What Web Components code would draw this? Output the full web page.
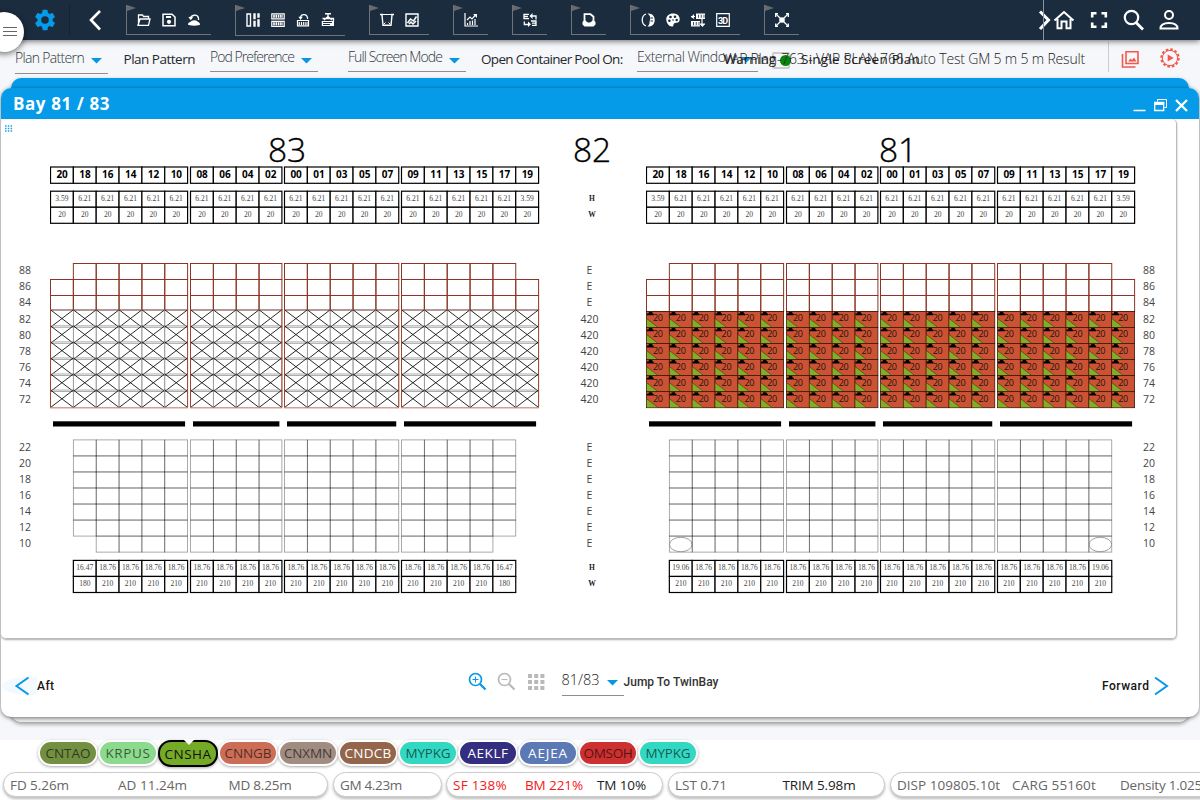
<!DOCTYPE html>
<html lang="en"><head><meta charset="utf-8"><title>Bay plan</title>
<style>html,body{margin:0;height:100%;overflow:hidden}body{font-family:"Open Sans","Noto Sans",sans-serif;background:#f5f7fa}</style></head>
<body><stow-app></stow-app>
<script>
const define=(name,html,setup)=>customElements.define(name,class extends HTMLElement{
  connectedCallback(){
    if(this.shadowRoot)return;
    const t=document.createElement('template');
    t.innerHTML=typeof html==='function'?html(this):html;
    this.attachShadow({mode:'open'}).append(t.content.cloneNode(true));
    if(setup)setup(this);
  }
});

/* One line of text tracked to a given width */
define('fit-text','<style>:host{display:block;white-space:nowrap;flex:none}span{display:inline-block}</style><span><slot></slot></span>',el=>{
  const w=+el.getAttribute('w'),s=el.shadowRoot.querySelector('span');
  el.style.width=w+'px';
  const n=el.textContent.length,now=s.getBoundingClientRect().width;
  s.style.letterSpacing=((w-now)/n)+'px';
});

const S='fill="none" stroke="currentColor" ';
const ICONS={
 folder:`<path ${S}stroke-width="1.3" d="M1.5 12V2h4l1 1.5h5V6M1 12.3l2-6.3h10l-1.5 6.3z"/>`,
 save:`<path ${S}stroke-width="1.5" d="M1 1.2h9L13 4v8.8H1z"/><path fill="currentColor" d="M4 3h5v2H4z"/><circle cx="7" cy="8.8" r="2.1" fill="currentColor"/>`,
 reload:`<path ${S}stroke-width="1.3" d="M3.5 5.5C4 2 10 .5 11.500 5V7"/><path fill="currentColor" d="M1.300 4l5-.3-2.500 3.600zM1 11.500C1 9 3.500 9.500 4.500 8c2-1 4-1 5.500 0 1 1.500 3 1 3 3.500 0 1.500-11.500 1.500-12 0z"/>`,
 layout:`<path ${S}stroke-width="1.400" d="M1 1h3.500v12H1zM8 1h1v4.500H8zM8 8.500h1V13H8zM12 1h1v3h-1zM12 7h1v6h-1z"/>`,
 stack:`<path ${S}stroke-width="1.200" d="M.8.8h12.400v5H.8zM.8 8.300h12.400v5H.8z"/><path ${S}stroke-width="3" stroke-dasharray="1.600 .7" d="M2.200 3.300H12M2.200 10.800H12"/>`,
 load:`<path ${S}stroke-width="1.200" d="M4.500 4.500C5 .5 11 .5 11.500 5v1M1.500 7.500h11v5.300h-11z"/><path fill="currentColor" d="M2.500 3.800h4.300L4.500 7z"/><path ${S}stroke-width="3" stroke-dasharray="1.200 1" d="M2.700 10.500H12"/>`,
 crane:`<path fill="currentColor" d="M4 0h6v1.500H4zM.8 8H13v5H.8z"/><path ${S}stroke-width="1.300" d="M7 1v2.500L3 7M7 3.500L11 7M1.500 5.500h11V8"/><path stroke="#1b2c3d" d="M2 9.500h9M2 11.500h7"/>`,
 bin:`<path ${S}stroke-width="1.400" d="M0 1.500h3M11 1.500h3M2 2l1 10.300h8L12 2"/><path ${S}d="M3 1.500h8M4 11l1.500-1.500M10 11l-1.500-1.500"/>`,
 image:`<path ${S}stroke-width="1.400" d="M1 1h12v12H1z"/><path ${S}stroke-width="1.500" d="M2.500 10l3-4 3 2 3-4.500M4 11l2-2 2 2 3-3"/>`,
 chart:`<path ${S}stroke-width="1.200" d="M1 0v13h13M3.500 12v-2M6 12V8M8.500 12V7.500M11 12V6M3 7l3-3 2 2 4-4.500"/><path fill="currentColor" d="M9 1h4v4z"/>`,
 swap:`<path ${S}stroke-width="1.300" d="M6 1.300H1v4.400h5M1 3.500h4M8 3h5v3.500M8 8h5v4.300H9M13 10.200H9M5 11.500H1.300V8.500"/><path fill="currentColor" d="M9.500 0v6L6.500 3zM5 8.500v5.500l3-2.700z"/>`,
 doc:`<path ${S}stroke-width="1.800" d="M2.500 9V1.200h6l3 2.500V9"/><path fill="currentColor" d="M.5 9c2-2.500 3-2 4-.5 1 1.300 4 1.300 5 0 1-1.500 2-1.500 4 .5v2.500l-2 2H2.500l-2-2z"/>`,
 contrast:`<path ${S}stroke-width="1.300" d="M5 1C0 3 0 11 5 13"/><path fill="currentColor" d="M6.500.5C11 0 13.700 3 13.700 7S11 14 6.500 13.500C9.500 11 8 9 9 7S9.500 3 6.500.5z"/><path stroke="#1b2c3d" d="M11 4v2M12 8H9.500"/>`,
 palette:`<path fill="currentColor" d="M7 .5C3 .5.3 3 .3 6.500S3 13.500 6 13.500c2 0 1-2 2-3s5.700 0 5.700-4S11 .5 7 .5z"/><g fill="#1b2c3d"><circle cx="4.500" cy="4" r="1.300"/><circle cx="9" cy="3.700" r="1.300"/><circle cx="3.400" cy="7.700" r="1.300"/><circle cx="10.700" cy="7" r="1.200"/><circle cx="7" cy="7" r=".8"/></g>`,
 blocks:`<path ${S}stroke-width="4" stroke-dasharray="2 .8" d="M5 3h9M0 10.500h9"/><path ${S}stroke-width="1.200" d="M5 1.200h9M5 5.300h9M0 8.500h9M0 12.800h9M0 3.500h4M11 6v7M14 11H9"/><path fill="currentColor" d="M0 4l3-3v5zM9 11h5l-2.500 3z"/>`,
 d3:`<path ${S}stroke-width="1.200" d="M.7.7h12.600v12.600H.7z"/><text x="7" y="10.500" font-size="9" font-weight="700" font-family="Roboto,sans-serif" text-anchor="middle" fill="currentColor" textLength="10">3D</text>`,
 expand:`<circle cx="7" cy="7" r="2.800" fill="currentColor"/><path ${S}stroke-width="1.300" d="M1 1l12 12M13 1L1 13"/><path ${S}stroke-width="1.300" d="M.7 4V.7H3M11 .7h2.300V4M.7 10.500v2.800H3M11 13.300h2.300v-2.800"/>`
};
define('tool-icon',el=>`<style>:host{display:block;width:14px;height:14px;flex:none;color:#fff}svg{display:block;overflow:visible}</style><svg width="14" height="14" viewBox="0 0 14 14">${ICONS[el.getAttribute('name')]}</svg>`);
define('tool-group',el=>`<style>:host{box-sizing:border-box;position:relative;display:flex;gap:11px;align-items:center;height:30px;margin-top:5px;width:${el.getAttribute('w')}px;padding:0 0 0 10px;border-left:1px solid #717477;border-bottom:1px solid #717477;flex:none}
svg{position:absolute;left:0;top:0}</style><svg width="9" height="6"><path fill="#666a6e" d="M0 0l9 3-9 3z"/></svg>${el.getAttribute('icons').split(' ').map(n=>`<tool-icon name="${n}"></tool-icon>`).join('')}`);

define('top-bar',`<style>:host{display:flex;height:40px;background:#1b2c3e;position:relative;z-index:3;box-shadow:0 1px 6px #0009}
.lead{width:126px;flex:none}.tools{display:flex;gap:24px}.end{margin-left:auto;width:166px}svg{display:block}.menu{position:absolute;left:-16px;top:12px;width:40px;height:40px;border-radius:50%;background:#fff;box-shadow:0 2px 6px #0008}
.menu i{display:block;width:14px;height:1px;background:#666;border:0;margin:0 0 3px 19px}.menu i:first-child{margin-top:15px}</style>
<svg class="lead" width="126" height="40"><path fill="#059be8" fill-rule="evenodd" transform="translate(32.300 7.300) scale(1.060)" d="M19.140 12.940c.04-.3.060-.61.060-.94s-.02-.64-.07-.94l2.030-1.580a.49.490 0 0 0 .12-.61l-1.920-3.320a.49.490 0 0 0-.59-.22l-2.390.96a7 7 0 0 0-1.620-.94l-.36-2.540a.48.480 0 0 0-.48-.41h-3.840a.47.470 0 0 0-.47.410l-.36 2.540a7.300 7.300 0 0 0-1.620.94l-2.390-.96a.48.480 0 0 0-.59.220L2.740 8.870a.47.470 0 0 0 .12.610l2.030 1.580a7 7 0 0 0 0 1.880l-2.030 1.580a.49.490 0 0 0-.12.610l1.920 3.320c.12.220.37.290.59.220l2.390-.96c.5.380 1.030.7 1.620.94l.36 2.540c.05.240.24.410.48.410h3.840c.24 0 .44-.17.470-.41l.36-2.540a7 7 0 0 0 1.620-.94l2.390.96c.22.080.47 0 .59-.22l1.920-3.320a.47.470 0 0 0-.12-.61zM12 15.600a3.600 3.600 0 1 1 0-7.200 3.600 3.600 0 0 1 0 7.200z"/><path stroke="#142231" d="M69.500 5v30"/><path fill="none" stroke="#fff" stroke-width="2.600" d="M100 11l-9 9 9 9.500"/></svg>
<div class="tools"><tool-group w="85" icons="folder save reload"></tool-group><tool-group w="110" icons="layout stack load crane" style="height:31px"></tool-group><tool-group w="60" icons="bin image"></tool-group><tool-group w="60" icons="chart" style="width:35px"></tool-group><tool-group w="35" icons="swap"></tool-group><tool-group w="35" icons="doc"></tool-group><tool-group w="110" icons="contrast palette blocks d3"></tool-group><tool-group w="35" icons="expand"></tool-group></div>
<svg class="end" width="166" height="40" viewBox="1034 0 166 40" fill="none" stroke="#fff" stroke-width="2"><path stroke-width="3" d="M1040 11.500l8.500 8.500-8.500 9"/><path stroke="#8a949d" stroke-width="1" d="M1043.500 0v40"/><path d="M1054.500 20.500l9.500-8.500 9.500 8.500M1057.500 19v9.300h4V21.500h5v6.800h4V19"/><path stroke-width="2.600" d="M1092.200 17.500v-4.300h4.300M1101.500 13.200h4.300v4.300M1105.800 22.500v4.300h-4.300M1096.500 26.800h-4.300v-4.300"/><circle cx="1131.500" cy="17.500" r="6.700" stroke-width="2.200"/><path stroke-width="2.800" d="M1136 22.500l7 7"/><circle cx="1169" cy="15" r="4"/><path d="M1160.500 28.500c0-4 4-5.500 8.500-5.500s8.500 1.500 8.500 5.500z"/></svg>
<div class="menu"><i></i><i></i><i></i></div>`);

define('drop-field',el=>`<style>:host{box-sizing:border-box;display:flex;align-items:flex-start;height:${el.getAttribute('h')||24}px;width:${el.getAttribute('w')}px;border-bottom:1px solid #8e8e8e;color:#33383d;font-size:14px;font-weight:300;line-height:18px;flex:none;justify-content:space-between}
svg{margin:${el.getAttribute('ty')||9}px 6px 0 0;flex:none}</style><slot></slot><svg width="11" height="6"><path fill="#0797e2" d="M0 0h11L5.500 5.500z"/></svg>`);

define('option-bar',`<style>:host{display:block;height:38px;position:relative;font-size:13.500px;color:#24282c;line-height:18px}
.row{display:flex;padding-left:15px;align-items:flex-start}.lab{margin-top:10px}.over{position:absolute;top:10px;font-weight:300;color:#222}
.box{position:absolute;left:772px;top:12px;width:14px;height:13px;border:2px solid #ccc;border-radius:2px}.dot{position:absolute;left:780px;top:15px;width:11px;height:11px;border-radius:50%;background:#0a870a}
.icons{position:absolute;right:0;top:0}</style>
<div class="row"><drop-field w="93" h="34" style="padding-top:9px;" ty="9"><fit-text w="69">Plan Pattern</fit-text></drop-field>
<fit-text class="lab" w="71.500" style="margin-left:15.500px">Plan Pattern</fit-text>
<drop-field w="108" h="32" style="margin-left:15px;padding-top:8px" ty="10"><fit-text w="84">Pod Preference</fit-text></drop-field>
<drop-field w="118" h="32" style="margin-left:30px;padding-top:8px" ty="10"><fit-text w="94">Full Screen Mode</fit-text></drop-field>
<fit-text class="lab" w="141.500" style="margin-left:15px">Open Container Pool On:</fit-text>
<drop-field w="121" h="32" style="margin-left:14.500px;padding-top:8px" ty="9"><fit-text w="98">External Window</fit-text></drop-field></div>
<span class="box"></span><span class="dot"></span>
<fit-text class="over" style="left:723px;font-size:14px" w="362">VAP Plan-763 - VAP PLAN 766 Auto Test GM 5 m 5 m Result</fit-text>
<fit-text class="over" style="left:724px;font-weight:400" w="52">Warning</fit-text><fit-text class="over" style="left:801px;font-weight:400" w="119">Single Screen Plan</fit-text>
<svg class="icons" width="100" height="38" viewBox="1100 40 100 38" fill="none" stroke="#f4584c"><path stroke="#c9ccd0" d="M1108.500 42v30"/><path stroke-width="1.600" d="M1126 51.700h12v11.800h-12zM1122.500 54v13h13"/><path fill="#f4584c" stroke="none" d="M1128 61.500l2.500-3 1.500 1.600 2-2.600 2.500 4z"/><circle cx="1170" cy="58" r="8.600" stroke-width="2.200" stroke-dasharray="2.600 1.900"/><circle cx="1170" cy="58" r="7.600" stroke-width="1"/><path fill="#f4584c" stroke="none" d="M1167.700 54.500l6 3.500-6 3.500z"/></svg>`);

/* Ship cross-section geometry */
const CW=22.85,RH=16.05;
const GROUPS=[[0,['20','18','16','14','12','10']],[140,['08','06','04','02']],[234,['00','01','03','05','07']],[351,['09','11','13','15','17','19']]];
const COLS=GROUPS.flatMap(([x,ns])=>ns.map((n,i)=>({n,x:x+i*CW+.5})));
const text=(x,y,s,a)=>`<text x="${x}" y="${y}" text-anchor="middle" ${a}>${s}</text>`;
const rect=(x,y,h,a)=>`<rect x="${x.toFixed(2)}" y="${y.toFixed(2)}" width="${CW}" height="${h}" ${a}/>`;
const serif='font-family="Liberation Serif,serif" font-size="7.500" fill="#444"';
const big='font-family="Open Sans" font-weight="300" font-size="33.500" textLength="38" fill="#000" stroke="#000" stroke-width=".35"';
define('bay-section',el=>{
  const right=el.getAttribute('mode')==='loaded';let o='';
  o+=text(right?252:237,43,el.getAttribute('no'),big);
  COLS.forEach((c,i)=>{
    const edge=i===0||i===20,m=c.x+CW/2;
    const bk='fill="#fff" stroke="#000" stroke-width="1.200"';
    o+=rect(c.x,48,16.3,bk)+text(m+.2,59.200,c.n,'font-family="Noto Sans" font-weight="700" font-size="10" fill="#000"');
    o+=rect(c.x,72.200,16.050,bk)+rect(c.x,88.250,16.050,bk)+text(m,82.200,edge?'3.59':'6.21',serif)+text(m,98,'20',serif);
    for(let r=edge?1:0;r<3;r++)o+=rect(c.x,144.500+r*16,right||r<2?16:14.500,'fill="none" stroke="#8c3524" stroke-width="1"');
    for(let r=0;r<6;r++){
      const y=192.400+r*RH;
      if(right){
        const g=c.x;
        o+=rect(g,y,RH,'fill="#cb5334" stroke="#3f1609" stroke-width=".8"')+`<path fill="#7db022" d="M${g+.4} ${y+7.200}L${g+11.500} ${y+15.700}H${g+.4}z"/><path fill="none" stroke="#542211" stroke-width=".6" d="M${g} ${y+7}l11.500 9"/><path d="M${g+.3} ${y+3.900}V${y+2.300}l2-.5V${y+.5}H${g+5.500}l.8 1.500 1 .5v1.400z"/>`+text(g+11.500,y+10,'20','font-family="Open Sans" font-size="9" textLength="10" fill="#1d120e"');
      }else{
        const t=y-1.600,b=y+RH-.2;
        o+=rect(c.x,t,b-t,'fill="none" stroke="#999" stroke-width=".8"')+`<path stroke="#111" stroke-width=".9" d="M${c.x} ${t}L${c.x+CW} ${b}M${c.x+CW} ${t}L${c.x} ${b}"/>`;
      }
    }
    if(!edge){
      const inner=i===1||i===19;
      for(let r=0;r<(inner&&!right?6:7);r++)o+=rect(c.x,320.900+r*16.030,16.030,'fill="none" stroke="#000" stroke-opacity=".42" stroke-width=".8"');
      if(inner&&right)o+=`<ellipse cx="${m}" cy="425.500" rx="11.300" ry="7.200" fill="none" stroke="#888" stroke-width=".8"/>`;
      o+=rect(c.x,441.400,16.050,bk)+rect(c.x,457.450,16.050,bk)+text(m,451,inner?(right?'19.06':'16.47'):'18.76',serif)+text(m,467,inner&&!right?'180':'210',serif);
    }
  });
  GROUPS.forEach(([x,ns])=>{const w=ns.length*CW;
    o+=`<rect x="${x+3}" y="302.300" width="${w-5}" height="5.200"/>`;
    if(!right)o+=`<path fill="none" stroke="#a04532" d="M${x+.5} 190v98M${x+w+.5} 190v98"/><path stroke="#e29b90" d="M${x} 289h${w+1}"/>`;
  });
  return `<style>:host{display:block;width:490px;flex:none}svg{display:block}</style><svg width="490" height="519">${o}</svg>`;
});
define('tier-labels',el=>{
  const mid=el.hasAttribute('mid'),w=+el.getAttribute('w'),cx=+el.getAttribute('cx');let o='';
  const up=[88,86,84,82,80,78,76,74,72],lo=[22,20,18,16,14,12,10];
  const f=`font-family="Open Sans" font-size="10.500" fill="#444"`;
  up.forEach((n,i)=>o+=text(cx,(i<3?155:156)+i*16-.2,mid?(i<3?'E':'420'):n,f+(mid&&i<3?'':` textLength="${mid?18:12}"`)));
  lo.forEach((n,i)=>o+=text(cx,332.200+i*16,mid?'E':n,f+(mid?'':' textLength="12"')));
  if(mid){o+=text(cx+2.500,43,'82',big);
    [[82,'H'],[98,'W'],[451,'H'],[467,'W']].forEach(([y,s])=>o+=text(cx+2.500,y,s,'font-family="Liberation Serif" font-size="7.500" font-weight="700" fill="#222"'));}
  return `<style>:host{display:block;flex:none}svg{display:block}</style><svg width="${w}" height="519">${o}</svg>`;
});

define('bay-window',`<style>:host{display:block;height:662px;position:relative}
.back{position:absolute;left:11px;right:11px;top:0;bottom:18px;border-radius:10px;background:linear-gradient(#059be8 60px,#eee 60px);box-shadow:0 2px 4px #0006}
.front{position:absolute;left:1px;right:1px;top:10px;bottom:23px;border-radius:10px;background:#fff;box-shadow:0 1px 4px #0008;overflow:hidden;display:flex;flex-direction:column}
header{height:31px;background:#059be8;color:#fff;display:flex;justify-content:space-between;font-size:17px;font-weight:700;line-height:32px;padding-left:12px;flex:none}
.canvas{position:relative;height:519px;width:1175px;border:0 solid #bbb;border-width:0 1px 1px 0;border-radius:5px;display:flex;box-shadow:0 1px 2px #0005;flex:none}
.grip{position:absolute;left:4px;top:6px}
footer{flex:1;display:flex;align-items:flex-start;padding-top:31px;font:500 12px/18px Roboto,sans-serif;color:#151515}
.r{margin-left:auto;display:flex}svg{flex:none;display:block}</style>
<div class="back"></div><div class="front"><header><fit-text w="97">Bay 81 / 83</fit-text>
<svg width="70" height="31" viewBox="1129 88 70 31" fill="none" stroke="#fff"><path stroke-width="1.600" d="M1133.500 110.500h12"/><path d="M1157.500 101.500v-2h9v8h-2"/><path stroke-width="1.300" d="M1154.700 102.500h9v8h-9z"/><path fill="#fff" d="M1155 102.500h8.500v2H1155z"/><path stroke-width="2.300" d="M1176 100l11 11M1187 100l-11 11"/></svg></header>
<div class="canvas"><svg class="grip" width="9" height="7"><path stroke="#269fdd" stroke-width="1.500" stroke-dasharray="1.500 1.300" d="M0 1h8M0 3.500h8M0 6h8"/></svg>
<tier-labels w="49" cx="24"></tier-labels><bay-section no="83" mode="empty"></bay-section><tier-labels mid w="106" cx="49.500"></tier-labels><bay-section no="81" mode="loaded"></bay-section><tier-labels w="40" cx="13"></tier-labels></div>
<footer><svg width="36" height="36" style="margin-top:-2px"><ellipse cx="27" cy="18" rx="26" ry="9" fill="#f3faff"/><path fill="none" stroke="#0797e8" stroke-width="2" d="M27.500 9.500L15.500 18l12 8.500"/></svg><fit-text w="17.500" style="margin-top:7px">Aft</fit-text>
<svg width="80" height="24" viewBox="466 670 80 24" style="margin:0 15.500px 0 411.500px" fill="none"><g stroke="#0797e8"><circle cx="475.500" cy="679.500" r="6" stroke-width="1.700"/><path stroke-width="2.300" d="M480 684l5.500 5.500"/><path d="M472.500 679.500h6M475.500 676.500v6"/></g><g stroke="#b9b9b9"><circle cx="504.500" cy="679.500" r="6" stroke-width="1.700"/><path stroke-width="2.300" d="M509 684l5.500 5.500"/><path d="M501.500 679.500h6"/></g><path stroke="#b9b9b9" stroke-width="4" stroke-dasharray="4 2.200" d="M528 676h16.500M528 682h16.500M528 688h16.500"/></svg>
<drop-field w="62" h="26" ty="9" style="box-sizing:border-box;padding-top:1px;font-family:'Open Sans';font-size:14.500px;color:#222"><fit-text w="38">81/83</fit-text></drop-field><fit-text w="95" style="margin-top:3px;color:#333">Jump To TwinBay</fit-text>
<div class="r"><fit-text w="47.500" style="margin-top:7px">Forward</fit-text><svg width="49.500" height="36" style="margin-top:-2px"><path fill="none" stroke="#0797e8" stroke-width="2" d="M5 9.500l12 8.500-12 8.500"/></svg></div></footer></div>`);

define('port-chip',el=>`<style>:host{box-sizing:border-box;position:relative;display:flex;align-items:center;justify-content:center;width:60px;height:26px;border:2px solid #fff;border-radius:13px;background:${el.getAttribute('bg')};color:${el.getAttribute('fg')||'#0000009c'};font-size:13.500px;box-shadow:0 1px 3px #0005;flex:none}
:host([active]){border-color:#000;height:27px;color:#111;font-weight:500}svg{position:absolute;top:-3px;left:23px}</style><fit-text w="${el.getAttribute('w')||45}"><slot></slot></fit-text>${el.hasAttribute('active')?'<svg width="12" height="6"><path fill="#fff" d="M0 0h12L6 6z"/></svg>':''}`,el=>{
  const f=el.shadowRoot.querySelector('fit-text'),s=f.shadowRoot.querySelector('span'),w=+f.getAttribute('w');
  s.style.letterSpacing='0';s.style.letterSpacing=(w-s.getBoundingClientRect().width)/el.textContent.length+'px';
});
define('stat-pill',el=>`<style>:host{box-sizing:border-box;display:flex;height:25px;width:${el.getAttribute('w')}px;border:1px solid #ccc;border-radius:13px;background:#fff;box-shadow:0 2px 3px #0004;align-items:center;padding-left:6px;flex:none;font-size:13.500px;color:#666}</style><slot></slot>`);
define('status-bar',`<style>:host{display:block;background:#fff;height:60px}.ports{display:flex;padding-left:38px;height:32px}.stats{display:flex;padding-left:3px;gap:4px}.red{color:#f41818}.dk{color:#222}</style>
<div class="ports"><port-chip bg="#728f42">CNTAO</port-chip><port-chip bg="#8cda8d">KRPUS</port-chip><port-chip bg="#75aa26" active w="47">CNSHA</port-chip><port-chip bg="#cc6e57" w="47">CNNGB</port-chip><port-chip bg="#a18c82" w="48">CNXMN</port-chip><port-chip bg="#93664b" fg="#fff" w="47">CNDCB</port-chip><port-chip bg="#32d8c2">MYPKG</port-chip><port-chip bg="#332e80" fg="#fff" w="41">AEKLF</port-chip><port-chip bg="#5b79b5" fg="#fff" w="40">AEJEA</port-chip><port-chip bg="#cc3030" w="49">OMSOH</port-chip><port-chip bg="#32d8c2">MYPKG</port-chip></div>
<div class="stats"><stat-pill w="325"><fit-text w="59">FD 5.26m</fit-text><fit-text w="69" style="margin-left:49px">AD 11.24m</fit-text><fit-text w="63" style="margin-left:41.500px">MD 8.25m</fit-text></stat-pill>
<stat-pill w="109" style="margin-left:1px"><fit-text w="62">GM 4.23m</fit-text></stat-pill>
<stat-pill w="217"><fit-text class="red" w="54">SF 138%</fit-text><fit-text class="red" w="58" style="margin-left:18px">BM 221%</fit-text><fit-text class="dk" w="49" style="margin-left:14px">TM 10%</fit-text></stat-pill>
<stat-pill w="217" style="margin-left:1px"><fit-text w="52">LST 0.71</fit-text><fit-text class="dk" w="73" style="margin-left:55.500px">TRIM 5.98m</fit-text></stat-pill>
<stat-pill w="340" style="margin-left:1px"><fit-text w="103">DISP 109805.10t</fit-text><fit-text w="84" style="margin-left:12px">CARG 55160t</fit-text><fit-text w="82" style="margin-left:24px">Density 1.025</fit-text></stat-pill></div>`);
define('stow-app',`<style>:host{display:flex;flex-direction:column;width:1200px;height:800px;overflow:hidden}</style><top-bar></top-bar><option-bar></option-bar><bay-window></bay-window><status-bar></status-bar>`);
</script></body></html>
